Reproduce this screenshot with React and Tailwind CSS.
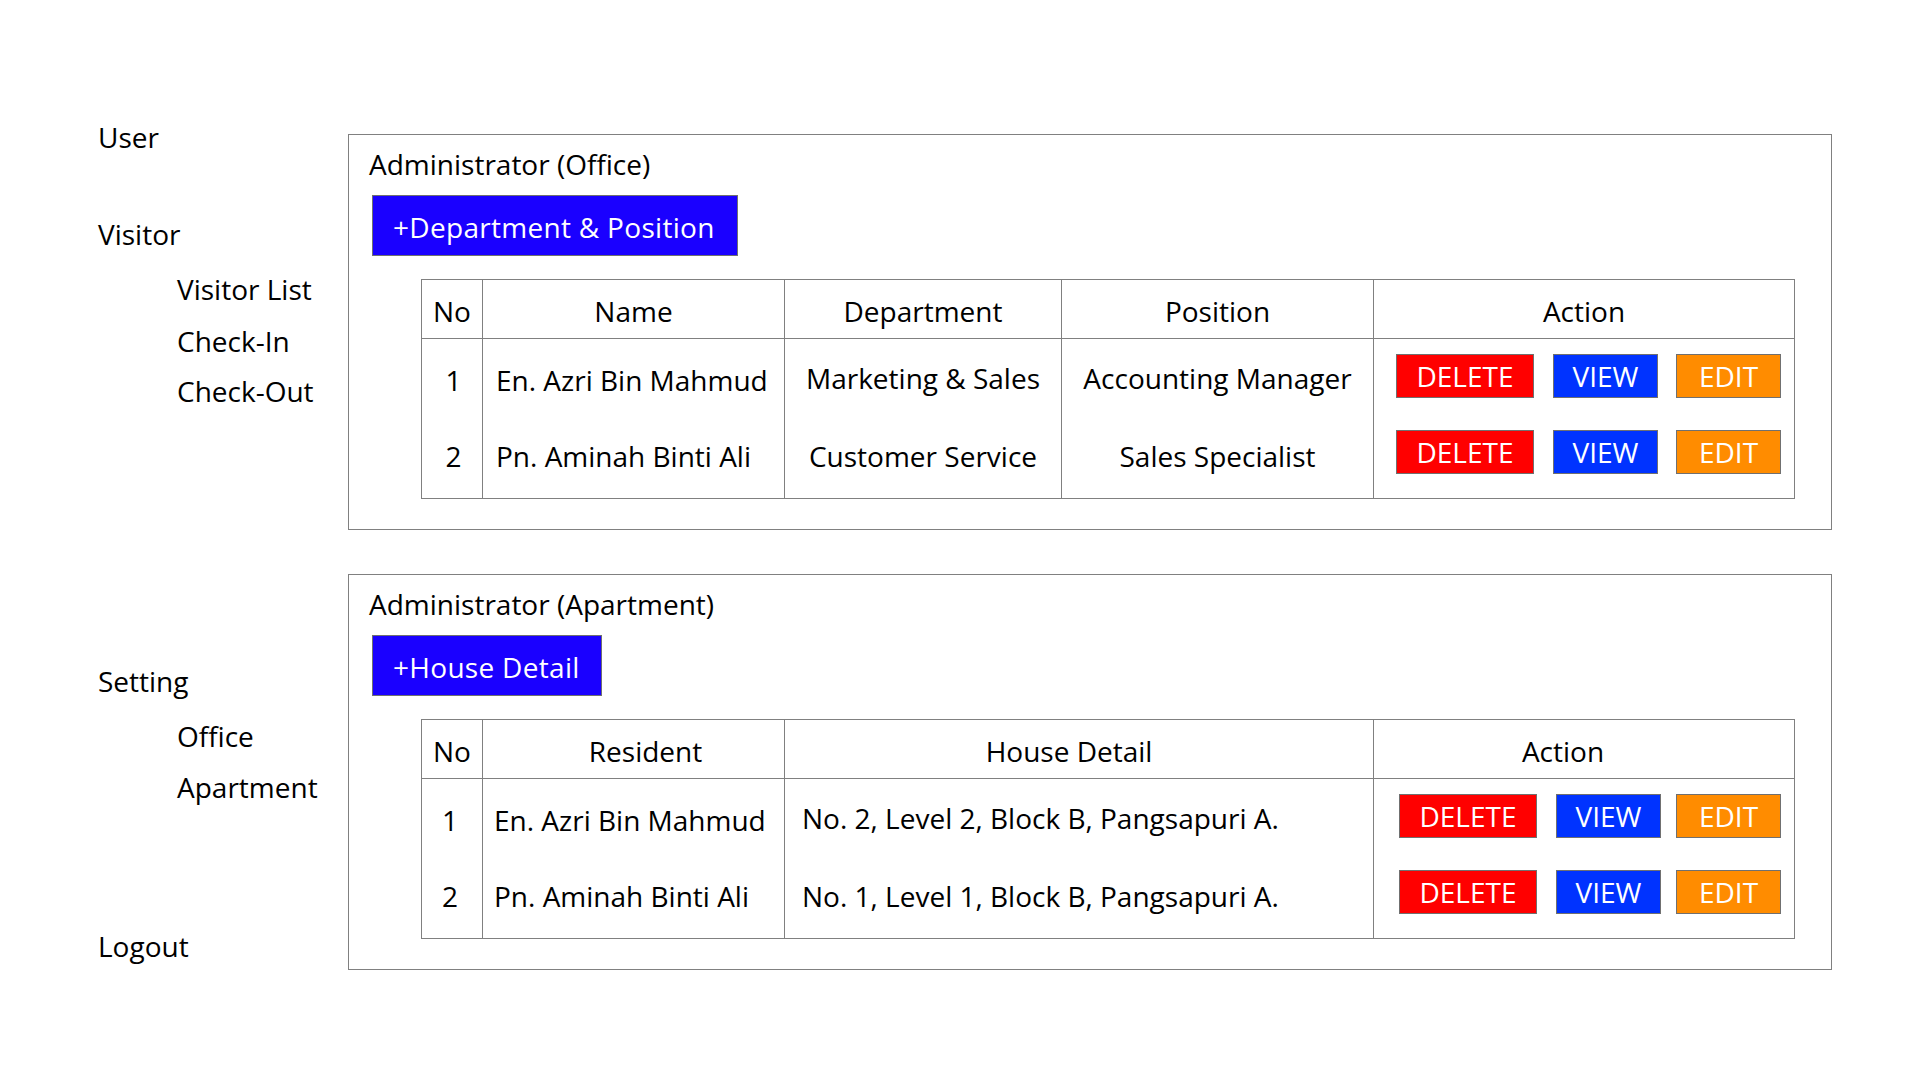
import React from 'react';

const font = { fontFamily: '"Open Sans", "Noto Sans", sans-serif' };

const officeRows = [
  { no: 1, name: 'En. Azri Bin Mahmud', dept: 'Marketing & Sales', pos: 'Accounting Manager' },
  { no: 2, name: 'Pn. Aminah Binti Ali', dept: 'Customer Service', pos: 'Sales Specialist' },
];

const houseRows = [
  { no: 1, name: 'En. Azri Bin Mahmud', house: 'No. 2, Level 2, Block B, Pangsapuri A.' },
  { no: 2, name: 'Pn. Aminah Binti Ali', house: 'No. 1, Level 1, Block B, Pangsapuri A.' },
];

const SideItem = ({ children, sub, className = '' }) => (
  <div className={`h-[50px] leading-[50px] whitespace-nowrap ${sub ? 'pl-[79px]' : ''} ${className}`}>
    {children}
  </div>
);

// Three action buttons in the last column
const Actions = ({ wide }) => (
  <div className={`flex ${wide ? 'pl-[25px]' : 'pl-[22px]'}`}>
    <button className="w-[138px] h-[44px] leading-[42px] bg-[#ff0000] border border-[#707070] text-white text-center">
      DELETE
    </button>
    <button className="ml-[19px] w-[105px] h-[44px] leading-[42px] bg-[#0033ff] border border-[#707070] text-white text-center">
      VIEW
    </button>
    <button className={`${wide ? 'ml-[15px]' : 'ml-[18px]'} w-[105px] h-[44px] leading-[42px] bg-[#ff8c00] border border-[#707070] text-white text-center`}>
      EDIT
    </button>
  </div>
);

const Panel = ({ title, action, btnWidth, children }) => (
  <div className="w-[1484px] h-[396px] border border-[#808080] pt-[10px]">
    <div className="pl-[20px] leading-[38px] h-[38px]">{title}</div>
    <button className={`ml-[23px] mt-[12px] h-[61px] pt-[3px] leading-[56px] ${btnWidth} bg-[#1a00ff] border border-[#707070] text-white text-left pl-[20px] tracking-[0.3px]`}>
      {action}
    </button>
    <div className="mt-[23px] pl-[72px]">{children}</div>
  </div>
);

const cell = 'border-x border-[#808080] p-0';

export default function App() {
  return (
    <div className="w-[1920px] h-[1080px] bg-white text-black text-[28px] flex" style={font}>
      {/* sidebar */}
      <div className="w-[348px] pl-[98px] pt-[112px] flex flex-col">
        <SideItem>User</SideItem>
        <SideItem className="mt-[47px]">Visitor</SideItem>
        <SideItem sub className="mt-[5px]">Visitor List</SideItem>
        <SideItem sub className="mt-[2px]">Check-In</SideItem>
        <SideItem sub>Check-Out</SideItem>
        <SideItem className="mt-[240px]">Setting</SideItem>
        <SideItem sub className="mt-[5px]">Office</SideItem>
        <SideItem sub className="mt-[1px]">Apartment</SideItem>
        <SideItem className="mt-[109px]">Logout</SideItem>
      </div>

      {/* main */}
      <div className="pt-[134px] flex flex-col gap-[44px]">
        <Panel title="Administrator (Office)" action="+Department & Position" btnWidth="w-[366px]">
          <table className="table-fixed border-collapse border border-[#808080] w-[1373px]">
            <colgroup>
              <col className="w-[61px]" />
              <col className="w-[302px]" />
              <col className="w-[277px]" />
              <col className="w-[312px]" />
              <col className="w-[421px]" />
            </colgroup>
            <thead>
              <tr className="h-[59px] border-b border-[#808080]">
                <th className={`${cell} font-normal text-center pt-[3px]`}>No</th>
                <th className={`${cell} font-normal text-center pt-[3px]`}>Name</th>
                <th className={`${cell} font-normal text-center pt-[3px]`}>Department</th>
                <th className={`${cell} font-normal text-center pt-[3px]`}>Position</th>
                <th className={`${cell} font-normal text-center pt-[3px]`}>Action</th>
              </tr>
            </thead>
            <tbody>
              {officeRows.map((r, i) => (
                <tr key={r.no} className={i === 0 ? 'h-[76px]' : 'h-[84px]'}>
                  <td className={`${cell} align-top text-center pl-[3px] pt-[22px] leading-[38px]`}>{r.no}</td>
                  <td className={`${cell} align-top pl-[13px] pt-[22px] leading-[38px] whitespace-nowrap`}>{r.name}</td>
                  <td className={`${cell} align-top text-center ${i === 0 ? 'pt-[20px]' : 'pt-[22px]'} leading-[38px] whitespace-nowrap`}>{r.dept}</td>
                  <td className={`${cell} align-top text-center ${i === 0 ? 'pt-[20px]' : 'pt-[22px]'} leading-[38px] whitespace-nowrap`}>{r.pos}</td>
                  <td className={`${cell} align-top pt-[15px]`}>
                    <Actions />
                  </td>
                </tr>
              ))}
            </tbody>
          </table>
        </Panel>

        <Panel title="Administrator (Apartment)" action="+House Detail" btnWidth="w-[230px]">
          <table className="table-fixed border-collapse border border-[#808080] w-[1373px]">
            <colgroup>
              <col className="w-[61px]" />
              <col className="w-[302px]" />
              <col className="w-[589px]" />
              <col className="w-[421px]" />
            </colgroup>
            <thead>
              <tr className="h-[59px] border-b border-[#808080]">
                <th className={`${cell} font-normal text-center pt-[3px]`}>No</th>
                <th className={`${cell} font-normal text-center pt-[3px] pl-[24px]`}>Resident</th>
                <th className={`${cell} font-normal text-center pt-[3px] pr-[20px]`}>House Detail</th>
                <th className={`${cell} font-normal text-center pt-[3px] pr-[42px]`}>Action</th>
              </tr>
            </thead>
            <tbody>
              {houseRows.map((r, i) => (
                <tr key={r.no} className={i === 0 ? 'h-[76px]' : 'h-[84px]'}>
                  <td className={`${cell} align-top text-center pr-[4px] pt-[22px] leading-[38px]`}>{r.no}</td>
                  <td className={`${cell} align-top pl-[11px] pt-[22px] leading-[38px] whitespace-nowrap`}>{r.name}</td>
                  <td className={`${cell} align-top pl-[17px] ${i === 0 ? 'pt-[20px]' : 'pt-[22px]'} leading-[38px] whitespace-nowrap`}>{r.house}</td>
                  <td className={`${cell} align-top pt-[15px]`}>
                    <Actions wide />
                  </td>
                </tr>
              ))}
            </tbody>
          </table>
        </Panel>
      </div>
    </div>
  );
}
